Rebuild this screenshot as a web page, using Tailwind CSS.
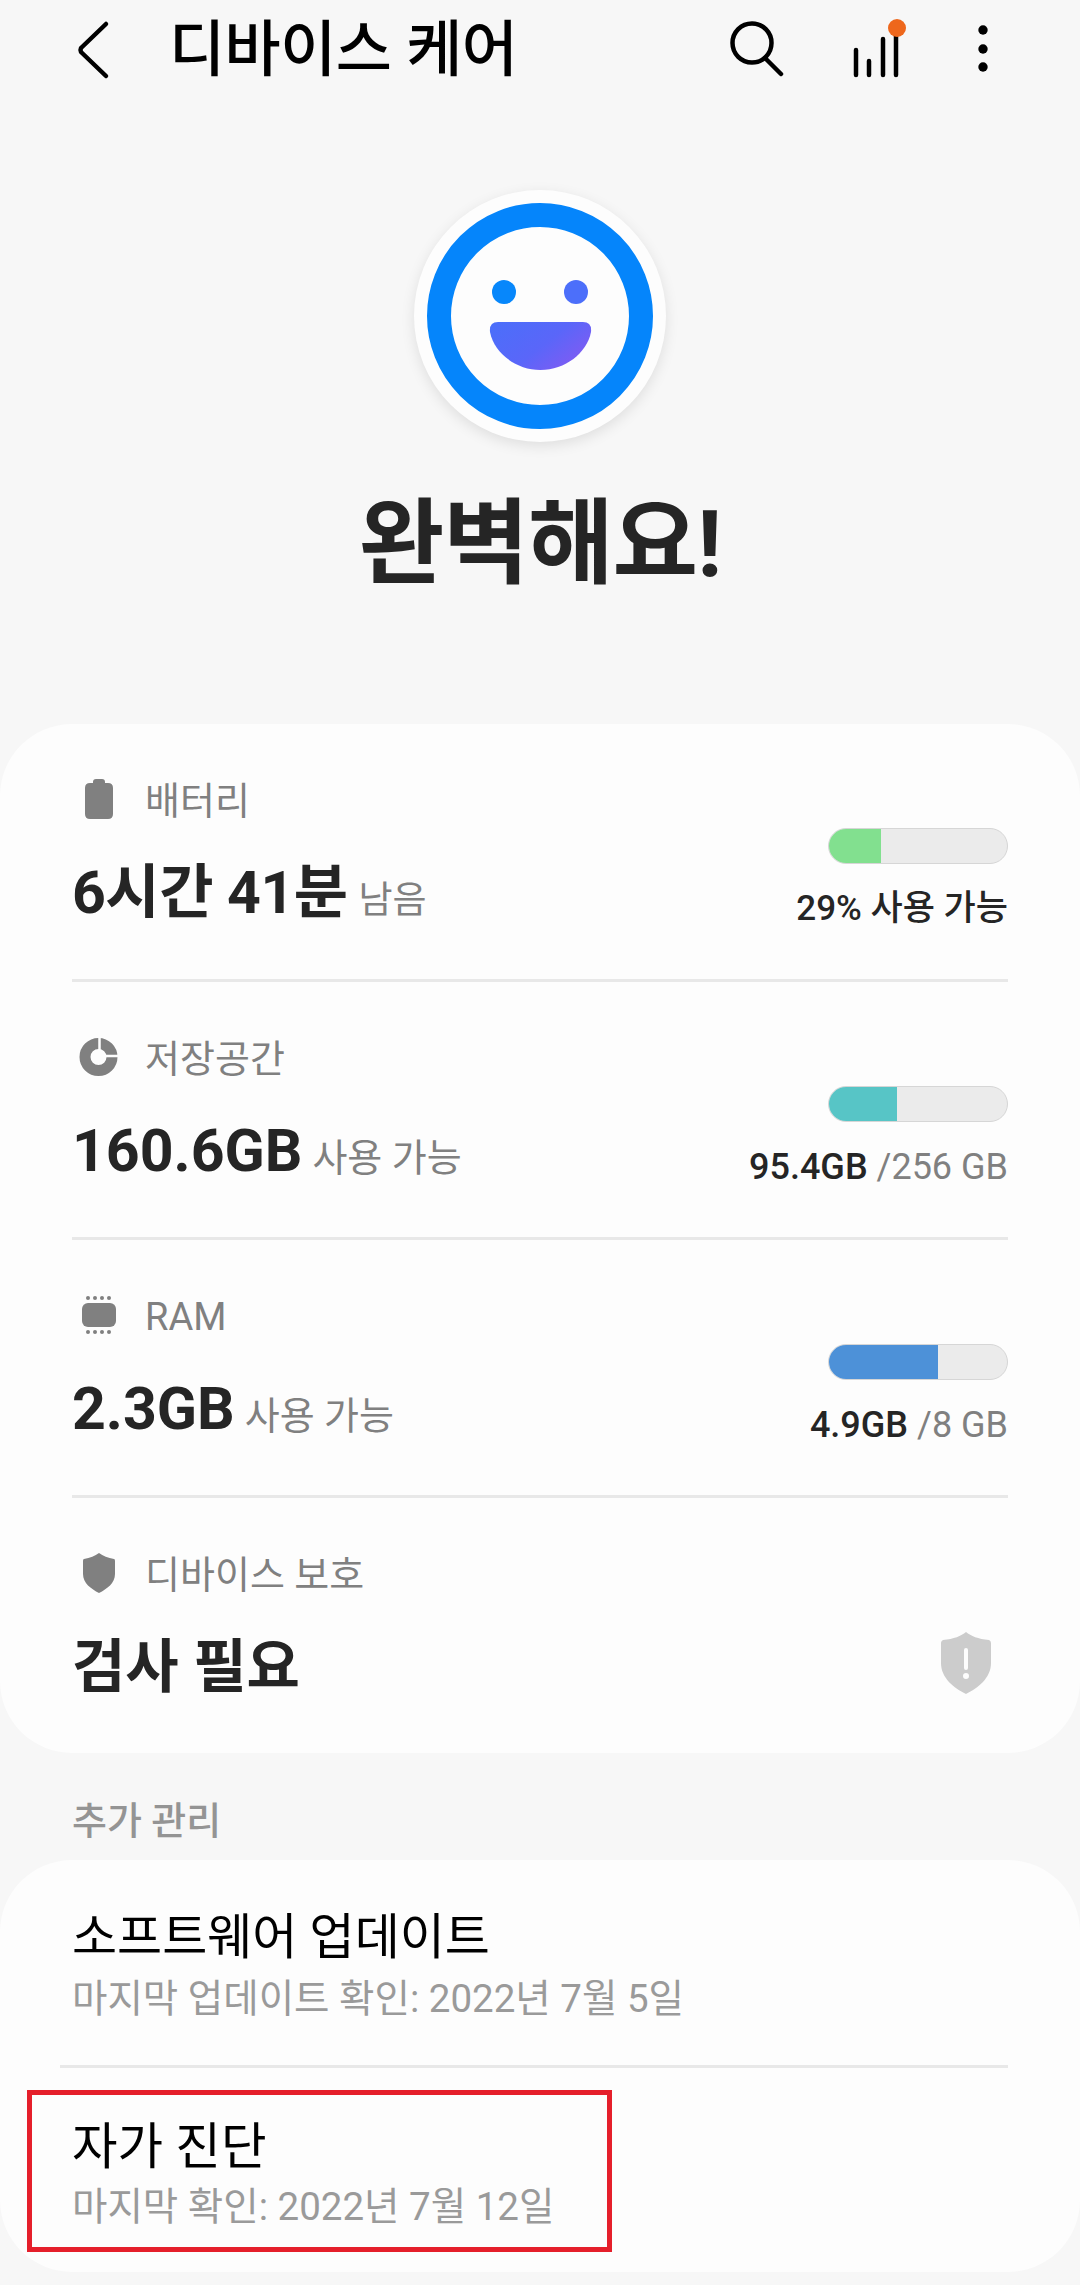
<!DOCTYPE html>
<html lang="ko">
<head>
    <meta charset="UTF-8">
    <meta name="viewport" content="width=device-width, initial-scale=1.0">
    <title>디바이스 케어</title>
    <script src="https://cdn.jsdelivr.net/npm/@tailwindcss/browser@4"></script>
</head>
<body class="bg-[#f7f7f7] h-[2285px] overflow-hidden font-['Roboto','Noto_Sans_CJK_KR',sans-serif]">

    <!-- Header -->
    <header class="h-[100px] flex items-center relative">
        <svg class="ml-[72px] w-[44px] h-[60px]" viewBox="0 0 44 60" fill="none" stroke="#000" stroke-width="4.5" stroke-linecap="round" stroke-linejoin="round">
            <path d="M34 4 L9 28 Q8 30 9 32 L34 56"/>
        </svg>
        <h1 class="ml-[53px] text-[61px] leading-none font-medium text-black tracking-[-0.5px]">디바이스 케어</h1>
        <div class="ml-auto mr-[85px] flex items-center">
            <svg class="w-[60px] h-[60px]" viewBox="0 0 60 60" fill="none" stroke="#000" stroke-width="4.5" stroke-linecap="round">
                <circle cx="26" cy="23" r="19.5"/>
                <path d="M39 38 L55 54"/>
            </svg>
            <svg class="ml-[59px] w-[70px] h-[70px]" viewBox="0 0 70 70" fill="none" stroke="#000" stroke-width="4.5" stroke-linecap="round">
                <path d="M11 35 V60 M24 46 V60 M38 24 V60 M51 20 V60"/>
                <circle cx="52" cy="13" r="9" fill="#ee671c" stroke="none"/>
            </svg>
            <svg class="ml-[56px] w-[24px] h-[60px]" viewBox="0 0 24 60" fill="#000">
                <circle cx="12" cy="10" r="4.7"/>
                <circle cx="12" cy="29" r="4.7"/>
                <circle cx="12" cy="47" r="4.7"/>
            </svg>
        </div>
    </header>

    <!-- Status -->
    <section class="h-[624px] flex flex-col items-center">
        <div class="mt-[90px] w-[252px] h-[252px] rounded-full bg-[#fdfdfd] shadow-[0_4px_14px_rgba(0,0,0,0.10)]">
            <svg class="w-[252px] h-[252px]" viewBox="0 0 252 252">
                <defs>
                    <linearGradient id="mouth" x1="0" y1="0" x2="1" y2="0.6">
                        <stop offset="0" stop-color="#4a6ffa"/>
                        <stop offset="0.6" stop-color="#5a66f9"/>
                        <stop offset="1" stop-color="#7d5cf3"/>
                    </linearGradient>
                </defs>
                <circle cx="126" cy="126" r="101" fill="none" stroke="#0585fb" stroke-width="24"/>
                <circle cx="90" cy="102" r="12" fill="#0787fb"/>
                <circle cx="162" cy="102" r="12" fill="#4c6ffa"/>
                <path d="M84 132 H169 Q178 132 177 142 C173 163 151 180 126.500 180 C102 180 80 163 76 142 Q75 132 84 132 Z" fill="url(#mouth)"/>
            </svg>
        </div>
        <h2 class="mt-[53px] h-[100px] leading-[100px] text-[93px] font-bold text-[#252525] tracking-[-1px]">완벽해요!</h2>
    </section>

    <!-- Main card -->
    <section class="bg-[#fdfdfd] rounded-[72px] h-[1029px]">

        <div class="mx-[72px] h-[258px] border-b-[3px] border-[#e8e8e8] flex justify-between">
            <div>
                <div class="mt-[53px] h-[48px] flex items-center text-[38px] text-[#808080]">
                    <svg class="ml-[4px] w-[46px] h-[46px] mr-[23px]" viewBox="0 0 46 46" fill="#808080"><path d="M17 3 Q17 0 20 0 H26 Q29 0 29 3 V4 H32 Q37 4 37 9 V35 Q37 40 32 40 H14 Q9 40 9 35 V9 Q9 4 14 4 H17 Z" transform="translate(0 1)"/></svg>
                    배터리
                </div>
                <div class="mt-[32px] h-[72px] flex items-baseline">
                    <span class="text-[59px] leading-[72px] font-bold text-[#252525] tracking-[-0.5px]">6시간 41분</span>
                    <span class="ml-[11px] text-[37px] text-[#808080]">남음</span>
                </div>
            </div>
            <div class="flex flex-col items-end">
                <div class="mt-[104px] w-[180px] h-[36px] rounded-full bg-[#ebebeb] border-[1.5px] border-[#d6d6d6] overflow-hidden">
                    <div class="h-full bg-[#82e08f]" style="width: 29%"></div>
                </div>
                <div class="mt-[23px] h-[44px] leading-[44px] text-[35px] font-medium text-[#252525]">29% 사용 가능</div>
            </div>
        </div>

        <div class="mx-[72px] h-[258px] border-b-[3px] border-[#e8e8e8] flex justify-between">
            <div>
                <div class="mt-[53px] h-[48px] flex items-center text-[38px] text-[#808080]">
                    <svg class="ml-[4px] w-[46px] h-[46px] mr-[23px]" viewBox="0 0 46 46" fill="none">
                        <circle cx="22.500" cy="21" r="13.500" stroke="#808080" stroke-width="11"/>
                        <path d="M23.500 21 V0 M23.500 20 H44" stroke="#fdfdfd" stroke-width="2.500"/>
                    </svg>
                    저장공간
                </div>
                <div class="mt-[32px] h-[72px] flex items-baseline">
                    <span class="text-[59px] leading-[72px] font-bold text-[#252525]">160.6GB</span>
                    <span class="ml-[10px] text-[38px] text-[#808080]">사용 가능</span>
                </div>
            </div>
            <div class="flex flex-col items-end">
                <div class="mt-[104px] w-[180px] h-[36px] rounded-full bg-[#ebebeb] border-[1.5px] border-[#d6d6d6] overflow-hidden">
                    <div class="h-full bg-[#57c5c6]" style="width: 38%"></div>
                </div>
                <div class="mt-[23px] h-[44px] leading-[44px] text-[36px] text-[#808080]"><span class="font-medium text-[#252525]">95.4GB</span> /256 GB</div>
            </div>
        </div>

        <div class="mx-[72px] h-[258px] border-b-[3px] border-[#e8e8e8] flex justify-between">
            <div>
                <div class="mt-[53px] h-[48px] flex items-center text-[38px] text-[#808080]">
                    <svg class="ml-[4px] w-[46px] h-[46px] mr-[23px]" viewBox="0 0 46 46" fill="#808080">
                        <rect x="6" y="9" width="34" height="24" rx="6"/>
                        <circle cx="12" cy="4" r="2"/><circle cx="19" cy="4" r="2"/><circle cx="26" cy="4" r="2"/><circle cx="33" cy="4" r="2"/>
                        <circle cx="12" cy="38" r="2"/><circle cx="19" cy="38" r="2"/><circle cx="26" cy="38" r="2"/><circle cx="33" cy="38" r="2"/>
                    </svg>
                    RAM
                </div>
                <div class="mt-[32px] h-[72px] flex items-baseline">
                    <span class="text-[59px] leading-[72px] font-bold text-[#252525]">2.3GB</span>
                    <span class="ml-[10px] text-[38px] text-[#808080]">사용 가능</span>
                </div>
            </div>
            <div class="flex flex-col items-end">
                <div class="mt-[104px] w-[180px] h-[36px] rounded-full bg-[#ebebeb] border-[1.5px] border-[#d6d6d6] overflow-hidden">
                    <div class="h-full bg-[#4d91d8]" style="width: 61%"></div>
                </div>
                <div class="mt-[23px] h-[44px] leading-[44px] text-[36px] text-[#808080]"><span class="font-medium text-[#252525]">4.9GB</span> /8 GB</div>
            </div>
        </div>

        <div class="mx-[72px] flex justify-between">
            <div>
                <div class="mt-[53px] h-[48px] flex items-center text-[38px] text-[#808080]">
                    <svg class="ml-[4px] w-[46px] h-[46px] mr-[23px]" viewBox="0 0 46 46" fill="#808080"><path d="M23 1 C27 4 32 6 38 7 Q39 7 39 9 V22 C39 31 31 37 23 41 C15 37 7 31 7 22 V9 Q7 7 8 7 C14 6 19 4 23 1 Z"/></svg>
                    디바이스 보호
                </div>
                <div class="mt-[32px] h-[72px] flex items-baseline">
                    <span class="text-[58px] leading-[72px] font-bold text-[#252525]">검사 필요</span>
                </div>
            </div>
            <svg class="mt-[133px] mr-[16px] w-[52px] h-[64px]" viewBox="0 0 52 64" fill="#cccccc">
                <path fill-rule="evenodd" d="M26 1 C31 5 38 8 49 9 Q51 10 51 12 V32 C51 47 38 57 26 63 C14 57 1 47 1 32 V12 Q1 10 3 9 C14 8 21 5 26 1 Z M24 19 Q24 17 26 17 Q28 17 28 19 V37 Q28 39 26 39 Q24 39 24 37 Z M26 42 A3 3 0 1 1 26 48 A3 3 0 1 1 26 42 Z"/>
            </svg>
        </div>
    </section>

    <!-- Additional -->
    <div class="h-[107px] pl-[72px] pt-[44px] text-[38px] leading-[48px] font-medium text-[#949494]">추가 관리</div>

    <section class="bg-[#fdfdfd] rounded-[72px] h-[412px]">
        <div class="ml-[60px] mr-[72px] pl-[12px] h-[208px] border-b-[3px] border-[#e8e8e8]">
            <div class="pt-[48px] h-[108px] leading-[60px] text-[49px] text-black">소프트웨어 업데이트</div>
            <div class="mt-[7px] h-[48px] leading-[48px] text-[38.5px] text-[#9a9a9a]">마지막 업데이트 확인: 2022년 7월 5일</div>
        </div>
        <div class="relative">
            <div class="pl-[72px]">
                <div class="pt-[49px] h-[109px] leading-[60px] text-[49.5px] text-black">자가 진단</div>
                <div class="mt-[6px] h-[48px] leading-[48px] text-[38.5px] text-[#9a9a9a]">마지막 확인: 2022년 7월 12일</div>
            </div>
            <!-- Red annotation box -->
            <div class="absolute left-[27px] top-[22px] w-[585px] h-[162px] border-[5px] border-[#e51f2b]"></div>
        </div>
    </section>

</body>
</html>
